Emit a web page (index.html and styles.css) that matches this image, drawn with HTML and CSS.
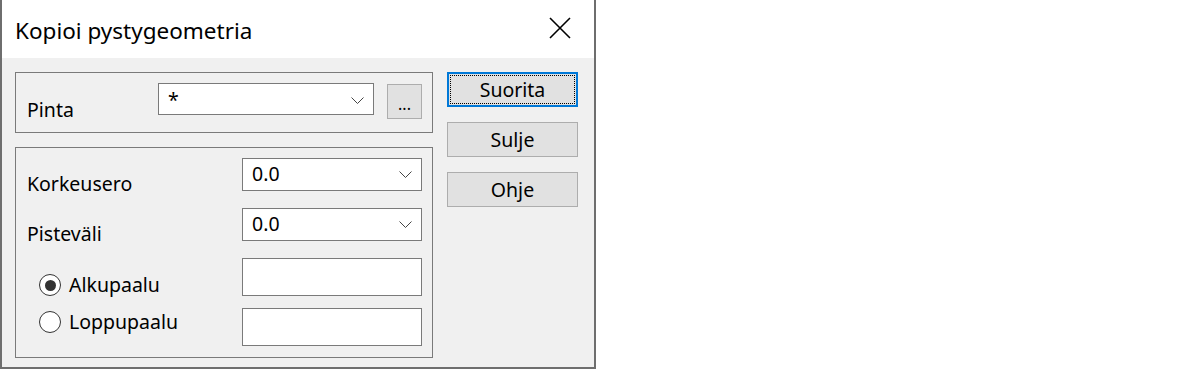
FILE: index.html
```html
<!DOCTYPE html>
<html lang="fi">

<head>
    <meta charset="UTF-8">
    <title>Kopioi pystygeometria</title>
    <link rel="stylesheet" href="styles.css">
</head>

<body>
    <div class="window">
        <div class="titlebar">
            <span class="title">Kopioi pystygeometria</span>
            <svg class="close" width="22" height="22" viewBox="0 0 22 22">
                <path d="M1 1 L21 21 M21 1 L1 21" stroke="#000" stroke-width="1.6" fill="none" />
            </svg>
        </div>
        <div class="client">
            <div class="groups">
                <!-- Surface -->
                <div class="group group-surface">
                    <span class="label label-surface">Pinta</span>
                    <div class="combo combo-surface">
                        <span class="value value-star">*</span>
                        <svg class="chevron" width="13" height="7" viewBox="0 0 13 7">
                            <path d="M0.5 0.5 L6.5 6.5 L12.5 0.5" stroke="#444" stroke-width="1" fill="none" />
                        </svg>
                    </div>
                    <button class="browse" type="button">...</button>
                </div>
                <!-- Parameters -->
                <div class="group group-params">
                    <div class="row">
                        <span class="label">Korkeusero</span>
                        <div class="combo">
                            <span class="value">0.0</span>
                            <svg class="chevron" width="13" height="7" viewBox="0 0 13 7">
                                <path d="M0.5 0.5 L6.5 6.5 L12.5 0.5" stroke="#444" stroke-width="1" fill="none" />
                            </svg>
                        </div>
                    </div>
                    <div class="row">
                        <span class="label">Pisteväli</span>
                        <div class="combo">
                            <span class="value">0.0</span>
                            <svg class="chevron" width="13" height="7" viewBox="0 0 13 7">
                                <path d="M0.5 0.5 L6.5 6.5 L12.5 0.5" stroke="#444" stroke-width="1" fill="none" />
                            </svg>
                        </div>
                    </div>
                    <div class="row row-station">
                        <label class="radio"><span class="radio-mark checked"></span>Alkupaalu</label>
                        <div class="textbox"></div>
                    </div>
                    <div class="row row-station row-last">
                        <label class="radio"><span class="radio-mark"></span>Loppupaalu</label>
                        <div class="textbox"></div>
                    </div>
                </div>
            </div>
            <div class="buttons">
                <button class="btn btn-default" type="button"><span class="focus">Suorita</span></button>
                <button class="btn" type="button">Sulje</button>
                <button class="btn" type="button">Ohje</button>
            </div>
        </div>
    </div>
</body>

</html>
```

FILE: styles.css
```css
/* General Reset */
* {
    margin: 0;
    padding: 0;
    box-sizing: border-box;
    font-family: 'Noto Sans', 'Open Sans', sans-serif;
}

body {
    background: #fff;
    color: #000;
}

/* Window frame */
.window {
    width: 596px;
    height: 369px;
    border: 2px solid #6e6e6e;
    border-top: 0;
    display: flex;
    flex-direction: column;
}

.titlebar {
    height: 58px;
    background: #fff;
    display: flex;
    align-items: center;
    justify-content: space-between;
    padding: 0 23px 0 13px;
}

.title {
    font-size: 22.5px;
    line-height: 26px;
    margin-top: 3px;
}

.close {
    display: block;
    margin-top: -2px;
}

/* Client area */
.client {
    flex: 1;
    background: #f0f0f0;
    display: flex;
    padding: 14px 0 0 13px;
}

.groups {
    width: 418px;
    display: flex;
    flex-direction: column;
    gap: 14px;
}

.group {
    border: 1px solid #7a7a7a;
}

.group-surface {
    height: 61px;
    display: flex;
    align-items: flex-start;
    padding: 10px 0 0 11px;
}

.group-params {
    height: 211px;
    padding: 10px 0 0 11px;
}

.label {
    display: block;
    font-size: 19.5px;
    line-height: 20px;
    width: 215px;
    margin-top: 16px;
}

.label-surface {
    width: 131px;
    margin-top: 17px;
}

/* Combo boxes and text boxes */
.combo,
.textbox {
    width: 180px;
    height: 33px;
    background: #fff;
    border: 1px solid #7a7a7a;
}

.combo {
    display: flex;
    align-items: center;
    justify-content: space-between;
    padding: 0 9px 1px 9px;
}

.combo-surface {
    width: 216px;
    height: 32px;
    align-items: flex-start;
}

.value {
    font-size: 19.5px;
    line-height: 24px;
}

.value-star {
    margin-top: 4px;
}

.combo-surface .chevron {
    margin-top: 13px;
}

.browse {
    width: 35px;
    height: 35px;
    margin: 1px 0 0 13px;
    background: #e1e1e1;
    border: 1px solid #adadad;
    font-size: 16px;
    line-height: 38px;
    color: #000;
}

.row {
    display: flex;
    align-items: flex-start;
    height: 33px;
    margin-bottom: 17px;
}

.row-station {
    height: 38px;
    margin-bottom: 12px;
}

.row-station .textbox {
    height: 38px;
}

/* Radio buttons */
.radio {
    width: 215px;
    display: flex;
    align-items: center;
    gap: 8px;
    padding-left: 12px;
    font-size: 19.5px;
    line-height: 22px;
    margin-top: 16px;
}

.row-last .radio {
    margin-top: 3px;
}

.radio-mark {
    width: 22px;
    height: 22px;
    border: 1.5px solid #333;
    border-radius: 50%;
    background: #fff;
    display: flex;
    align-items: center;
    justify-content: center;
}

.radio-mark.checked::after {
    content: "";
    width: 11px;
    height: 11px;
    border-radius: 50%;
    background: #333;
}

/* Command buttons */
.buttons {
    margin-left: 14px;
    display: flex;
    flex-direction: column;
    gap: 15px;
}

.btn {
    width: 131px;
    height: 35px;
    background: #e1e1e1;
    border: 1px solid #adadad;
    font-size: 19.5px;
    color: #000;
}

.btn-default {
    border: 2px solid #0078d7;
    padding: 1px;
}

.btn-default .focus {
    display: flex;
    align-items: center;
    justify-content: center;
    height: 100%;
    border: 1px dotted #000;
}
```
